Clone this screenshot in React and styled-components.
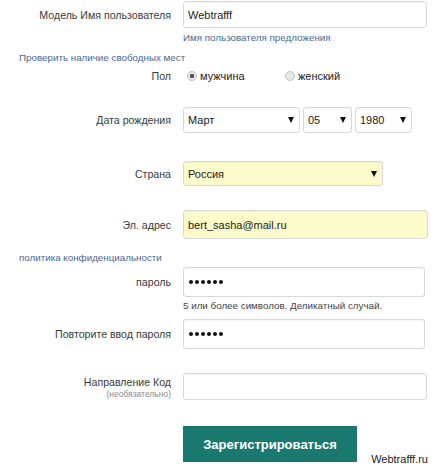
import React from 'react'
import styled, { createGlobalStyle } from 'styled-components'

const GlobalStyle = createGlobalStyle`
  body {
    margin: 0;
    background: #fff;
    font-family: "Liberation Sans", Arial, sans-serif;
    color: #333;
  }
`

const Page = styled.div`
  width: 434px;
  height: 467px;
  overflow: hidden;
`

const Form = styled.form`
  display: flex;
  flex-direction: column;
  padding-top: 1px;
`

const Row = styled.div`
  display: grid;
  grid-template-columns: 171px 1fr;
  column-gap: 12px;
  align-items: center;
  margin-top: ${props => props.$top || 0}px;
`

const Label = styled.label`
  text-align: right;
  font-size: 10.6px;
  color: #3a3a3a;
  line-height: 14px;
`

const SubLabel = styled.div`
  font-size: 8.5px;
  color: #8a8a8a;
  line-height: 10px;
`

const Field = styled.div`
  display: flex;
  align-items: center;
  gap: 3px;
`

const TextBox = styled.div`
  box-sizing: border-box;
  width: ${props => props.$width}px;
  height: ${props => props.$height || 27}px;
  border: 1px solid #d8d8d8;
  border-radius: 3px;
  background: ${props => (props.$yellow ? '#fbfbcb' : '#fff')};
  box-shadow: inset 0 1px 1px rgba(0, 0, 0, 0.04);
  display: flex;
  align-items: center;
  padding: 0 4px;
  font-size: 11px;
  color: #222;
`

const Dots = styled.span`
  display: flex;
  gap: 2px;
  padding-left: 1px;
`

const Dot = styled.span`
  width: 4px;
  height: 4px;
  border-radius: 50%;
  background: #111;
`

const Select = styled(TextBox)`
  justify-content: space-between;
  padding: 0 5px 0 4px;
`

const Caret = styled.span`
  width: 0;
  height: 0;
  border-left: 3px solid transparent;
  border-right: 3px solid transparent;
  border-top: 6px solid #111;
`

const Hint = styled.div`
  font-size: 9.8px;
  color: ${props => (props.$muted ? '#444' : '#4e6790')};
  line-height: 13px;
  margin-top: ${props => props.$top || 0}px;
  padding-left: ${props => props.$left}px;
`

const RadioGroup = styled.div`
  display: flex;
  align-items: center;
  padding-left: 4px;
`

const RadioItem = styled.span`
  display: inline-flex;
  align-items: center;
  gap: 3px;
  font-size: 11px;
  color: #222;
  width: ${props => props.$width}px;
`

const RadioDot = styled.span`
  box-sizing: border-box;
  width: 10px;
  height: 10px;
  border-radius: 50%;
  border: 1px solid #c4c4c4;
  background: ${props => (props.$checked ? 'radial-gradient(circle, #555 0 2px, #e8e8e8 2.5px)' : '#e9e9e9')};
`

const Button = styled.button`
  width: 174px;
  height: 36px;
  border: none;
  background: #19796f;
  color: #fff;
  font-family: "Liberation Sans", Arial, sans-serif;
  font-weight: bold;
  font-size: 13px;
  padding: 0;
`

const Footer = styled.div`
  display: flex;
  align-items: flex-end;
  justify-content: space-between;
  margin-top: 26px;
  padding-left: 183px;
  padding-right: 6px;
`

const Brand = styled.span`
  font-size: 11px;
  color: #222;
  margin-bottom: -3px;
`

const password = Array.from({ length: 6 })

const App = () => {
  return (
    <Page>
      <GlobalStyle />
      <Form>
        <Row>
          <Label>Модель Имя пользователя</Label>
          <Field>
            <TextBox $width={244} $height={27}>Webtrafff</TextBox>
          </Field>
        </Row>
        <Hint $left={183} $top={3}>Имя пользователя предложения</Hint>
        <Hint $left={19} $top={7}>Проверить наличие свободных мест</Hint>
        <Row $top={5}>
          <Label>Пол</Label>
          <RadioGroup>
            <RadioItem $width={98}><RadioDot $checked />мужчина</RadioItem>
            <RadioItem><RadioDot />женский</RadioItem>
          </RadioGroup>
        </Row>
        <Row $top={24}>
          <Label>Дата рождения</Label>
          <Field>
            <Select $width={117} $height={26}>Март<Caret /></Select>
            <Select $width={49} $height={26}>05<Caret /></Select>
            <Select $width={57} $height={26}>1980<Caret /></Select>
          </Field>
        </Row>
        <Row $top={28}>
          <Label>Страна</Label>
          <Field>
            <Select $width={200} $height={25} $yellow>Россия<Caret /></Select>
          </Field>
        </Row>
        <Row $top={24}>
          <Label>Эл. адрес</Label>
          <Field>
            <TextBox $width={245} $height={29} $yellow>bert_sasha@mail.ru</TextBox>
          </Field>
        </Row>
        <Hint $left={19} $top={12}>политика конфиденциальности</Hint>
        <Row $top={3}>
          <Label>пароль</Label>
          <Field>
            <TextBox $width={242} $height={30}>
              <Dots>{password.map((_, i) => <Dot key={i} />)}</Dots>
            </TextBox>
          </Field>
        </Row>
        <Hint $left={183} $top={2} $muted>5 или более символов. Деликатный случай.</Hint>
        <Row $top={7}>
          <Label>Повторите ввод пароля</Label>
          <Field>
            <TextBox $width={242} $height={30}>
              <Dots>{password.map((_, i) => <Dot key={i} />)}</Dots>
            </TextBox>
          </Field>
        </Row>
        <Row $top={24}>
          <Label>
            Направление Код
            <SubLabel>(необязательно)</SubLabel>
          </Label>
          <Field>
            <TextBox $width={244} $height={27} />
          </Field>
        </Row>
        <Footer>
          <Button type="button">Зарегистрироваться</Button>
          <Brand>Webtrafff.ru</Brand>
        </Footer>
      </Form>
    </Page>
  )
}

export default App
